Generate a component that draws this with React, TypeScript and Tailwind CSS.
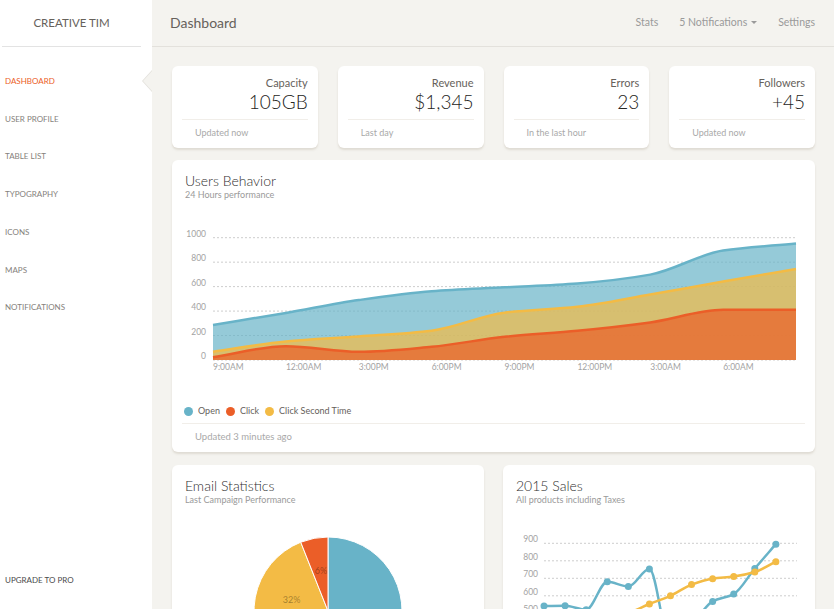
import React from "react";

const BLUE = "#68B3C8";
const YELLOW = "#F3BB45";
const RED = "#EB5E28";

type Pt = [number, number];

// monotone cubic, same idea as chartist's default smoothing
function smoothPath(pts: Pt[]) {
  const n = pts.length;
  const xs = pts.map((p) => p[0]);
  const ys = pts.map((p) => p[1]);
  const dxs: number[] = [];
  const ds: number[] = [];
  for (let i = 0; i < n - 1; i++) {
    dxs.push(xs[i + 1] - xs[i]);
    ds.push((ys[i + 1] - ys[i]) / dxs[i]);
  }
  const ms: number[] = [ds[0]];
  for (let i = 1; i < n - 1; i++) {
    if (ds[i] === 0 || ds[i - 1] === 0 || ds[i - 1] > 0 !== ds[i] > 0) {
      ms.push(0);
    } else {
      ms.push(
        (3 * (dxs[i - 1] + dxs[i])) /
          ((2 * dxs[i] + dxs[i - 1]) / ds[i - 1] + (dxs[i] + 2 * dxs[i - 1]) / ds[i])
      );
    }
  }
  ms.push(ds[n - 2]);
  let d = `M${xs[0]},${ys[0]}`;
  for (let i = 0; i < n - 1; i++) {
    d += ` C${xs[i] + dxs[i] / 3},${ys[i] + (ms[i] * dxs[i]) / 3} ${xs[i + 1] - dxs[i] / 3},${
      ys[i + 1] - (ms[i + 1] * dxs[i]) / 3
    } ${xs[i + 1]},${ys[i + 1]}`;
  }
  return d;
}

const stats = [
  { label: "Capacity", value: "105GB", foot: "Updated now" },
  { label: "Revenue", value: "$1,345", foot: "Last day" },
  { label: "Errors", value: "23", foot: "In the last hour" },
  { label: "Followers", value: "+45", foot: "Updated now" },
];

const navItems = ["Dashboard", "User Profile", "Table List", "Typography", "Icons", "Maps", "Notifications"];

const behaviorLabels = ["9:00AM", "12:00AM", "3:00PM", "6:00PM", "9:00PM", "12:00PM", "3:00AM", "6:00AM"];
const behaviorSeries = [
  { color: BLUE, data: [287, 385, 490, 562, 594, 626, 698, 895, 952] },
  { color: YELLOW, data: [67, 152, 193, 240, 387, 435, 535, 642, 744] },
  { color: RED, data: [23, 113, 67, 108, 190, 239, 307, 410, 410] },
];

const salesSeries = [
  { color: BLUE, data: [542, 543, 520, 680, 653, 753, 326, 434, 568, 610, 756, 895] },
  { color: YELLOW, data: [230, 293, 380, 480, 503, 553, 600, 664, 698, 710, 736, 795] },
];

const cardShadow = "shadow-[0_2px_2px_rgba(204,197,185,0.5)]";

function StatCard({ label, value, foot }: { label: string; value: string; foot: string }) {
  return (
    <div className={`h-[82px] rounded-[6px] bg-white px-[10px] pt-[10px] ${cardShadow}`}>
      <div className="text-right text-[11px] leading-[14px] text-[#66615b]">{label}</div>
      <div className="mt-[1px] text-right text-[19px] leading-[22px] font-light text-[#252422]">{value}</div>
      <div className="mt-[6px] border-t border-[#f1eee9]" />
      <div className="pl-[13px] pt-[6px] text-[9px] leading-[13px] text-[#a9a9a9]">{foot}</div>
    </div>
  );
}

function BehaviorChart() {
  const y = (v: number) => 160 - v * 0.1223;
  const x = (i: number) => 41 + i * 72.875;
  const base = y(0);
  return (
    <svg width={643} height={180} className="block">
      {[0, 200, 400, 600, 800, 1000].map((v) => (
        <g key={v}>
          <line x1={41} x2={624} y1={y(v)} y2={y(v)} stroke="rgba(0,0,0,0.2)" strokeWidth={1} strokeDasharray="2 2" />
          <text x={34} y={y(v) - 3} textAnchor="end" dominantBaseline="middle" fontSize={8.5} fill="#a3a3a3">
            {v}
          </text>
        </g>
      ))}
      {behaviorSeries.map((s) => {
        const pts: Pt[] = s.data.map((v, i) => [x(i), y(v)]);
        const line = smoothPath(pts);
        const area = `${line} L${x(s.data.length - 1)},${base} L${x(0)},${base} Z`;
        return (
          <g key={s.color}>
            <path d={area} fill={s.color} fillOpacity={0.7} />
            <path d={line} fill="none" stroke={s.color} strokeWidth={2.5} />
          </g>
        );
      })}
      {behaviorLabels.map((l, i) => (
        <text key={l} x={x(i)} y={168} dominantBaseline="middle" fontSize={8.5} fill="#a3a3a3">
          {l}
        </text>
      ))}
    </svg>
  );
}

function PieChart() {
  const cx = 156;
  const cy = 106;
  const r = 74;
  const slices = [
    { color: BLUE, pct: 62 },
    { color: YELLOW, pct: 32 },
    { color: RED, pct: 6 },
  ];
  const pt = (deg: number, rad: number): Pt => {
    const a = (deg * Math.PI) / 180;
    return [cx + rad * Math.sin(a), cy - rad * Math.cos(a)];
  };
  let start = 0;
  return (
    <svg width={312} height={190} className="block">
      {slices.map((s) => {
        const end = start + (s.pct / 100) * 360;
        const [x0, y0] = pt(start, r);
        const [x1, y1] = pt(end, r);
        const large = end - start > 180 ? 1 : 0;
        const mid = (start + end) / 2;
        const [lx, ly] = pt(mid, r / 2);
        start = end;
        return (
          <g key={s.color}>
            <path
              d={`M${cx},${cy} L${x0},${y0} A${r},${r} 0 ${large} 1 ${x1},${y1} Z`}
              fill={s.color}
              stroke="#ffffff"
              strokeWidth={1}
            />
            {ly < 108 && (
              <text
                x={lx}
                y={ly - 3}
                textAnchor="middle"
                dominantBaseline="middle"
                fontSize={9}
                fill="rgba(0,0,0,0.35)"
              >
                {s.pct}%
              </text>
            )}
          </g>
        );
      })}
    </svg>
  );
}

function SalesChart() {
  const y = (v: number) => 38.3 + (900 - v) * 0.175;
  const x = (i: number) => 41 + i * 21.08;
  return (
    <svg width={312} height={160} className="block">
      {[900, 800, 700, 600, 500, 400, 300, 200].map((v) => (
        <g key={v}>
          <line x1={41} x2={294} y1={y(v)} y2={y(v)} stroke="rgba(0,0,0,0.2)" strokeWidth={1} strokeDasharray="2 2" />
          <text x={35} y={y(v) - 3} textAnchor="end" dominantBaseline="middle" fontSize={8.5} fill="#a3a3a3">
            {v}
          </text>
        </g>
      ))}
      {salesSeries.map((s) => {
        const pts: Pt[] = s.data.map((v, i) => [x(i), y(v)]);
        return (
          <g key={s.color}>
            <path d={smoothPath(pts)} fill="none" stroke={s.color} strokeWidth={2.5} />
            {pts.map(([px, py], i) => (
              <circle key={i} cx={px} cy={py} r={3.5} fill={s.color} />
            ))}
          </g>
        );
      })}
    </svg>
  );
}

function CardHeader({ title, sub }: { title: string; sub: string }) {
  return (
    <div className="px-[13px] pt-[12px]">
      <div className="text-[14px] leading-[18px] font-light text-[#2f2f2f]">{title}</div>
      <div className="text-[9px] leading-[10px] text-[#9a9a9a]">{sub}</div>
    </div>
  );
}

export default function App() {
  return (
    <div className="flex h-screen w-full overflow-hidden bg-[#f4f3ef] font-['Lato',sans-serif]">
      <aside className="relative flex w-[152px] shrink-0 flex-col bg-white">
        <div className="ml-[2px] flex h-[47px] w-[139px] items-center justify-center border-b border-[#e3e3e3] text-[11.5px] text-[#66615b]">
          CREATIVE TIM
        </div>
        <nav className="pt-[15px]">
          {navItems.map((item, i) => (
            <div
              key={item}
              className={`relative flex h-[37.75px] items-center pl-[5px] text-[8px] uppercase ${
                i === 0 ? "text-[#eb5e28]" : "text-[#85817c]"
              }`}
            >
              {item}
              {i === 0 && (
                <>
                  <span className="absolute right-0 top-1/2 h-0 w-0 -translate-y-1/2 border-y-[11px] border-r-[10px] border-y-transparent border-r-[#e3e1dc]" />
                  <span className="absolute right-[-1px] top-1/2 h-0 w-0 -translate-y-1/2 border-y-[11px] border-r-[10px] border-y-transparent border-r-[#f4f3ef]" />
                </>
              )}
            </div>
          ))}
        </nav>
        <div className="mt-auto mb-[10px] flex h-[37.67px] items-center pl-[5px] text-[8px] uppercase text-[#4b4b4b]">
          Upgrade to Pro
        </div>
      </aside>

      <main className="flex min-w-0 flex-1 flex-col overflow-hidden">
        <header className="flex h-[47px] shrink-0 items-center justify-between border-b border-[#e3e1dc] pb-[1px] pl-[18px] pr-[19px]">
          <div className="text-[14px] text-[#66615b]">Dashboard</div>
          <div className="flex items-center gap-[21px] text-[10.5px] text-[#9a9a9a]">
            <span>Stats</span>
            <span className="flex items-center">
              5 Notifications
              <span className="ml-[4px] inline-block h-0 w-0 border-x-[3px] border-t-[3px] border-x-transparent border-t-[#9a9a9a]" />
            </span>
            <span>Settings</span>
          </div>
        </header>

        <div className="pl-[20px] pr-[19px] pt-[19px]">
          <div className="grid grid-cols-4 gap-x-[20px]">
            {stats.map((s) => (
              <StatCard key={s.label} {...s} />
            ))}
          </div>

          <div className={`mt-[12px] h-[292px] rounded-[6px] bg-white ${cardShadow}`}>
            <CardHeader title="Users Behavior" sub="24 Hours performance" />
            <BehaviorChart />
            <div className="mt-[24px] flex h-[14px] items-center pl-[12px] text-[9px] text-[#66615b]">
              <span className="h-[9px] w-[9px] rounded-full bg-[#68B3C8]" />
              <span className="ml-[5px] mr-[6px]">Open</span>
              <span className="h-[9px] w-[9px] rounded-full bg-[#EB5E28]" />
              <span className="ml-[5px] mr-[6px]">Click</span>
              <span className="h-[9px] w-[9px] rounded-full bg-[#F3BB45]" />
              <span className="ml-[5px]">Click Second Time</span>
            </div>
            <div className="mx-[10px] mt-[5px] border-t border-[#f1eee9]" />
            <div className="pl-[23px] pt-[6px] text-[9.5px] leading-[14px] text-[#a9a9a9]">Updated 3 minutes ago</div>
          </div>

          <div className="mt-[13px] grid grid-cols-2 gap-[19px]">
            <div className={`h-[320px] rounded-[6px] bg-white ${cardShadow}`}>
              <CardHeader title="Email Statistics" sub="Last Campaign Performance" />
              <PieChart />
            </div>
            <div className={`h-[320px] rounded-[6px] bg-white ${cardShadow}`}>
              <CardHeader title="2015 Sales" sub="All products including Taxes" />
              <SalesChart />
            </div>
          </div>
        </div>
      </main>
    </div>
  );
}
